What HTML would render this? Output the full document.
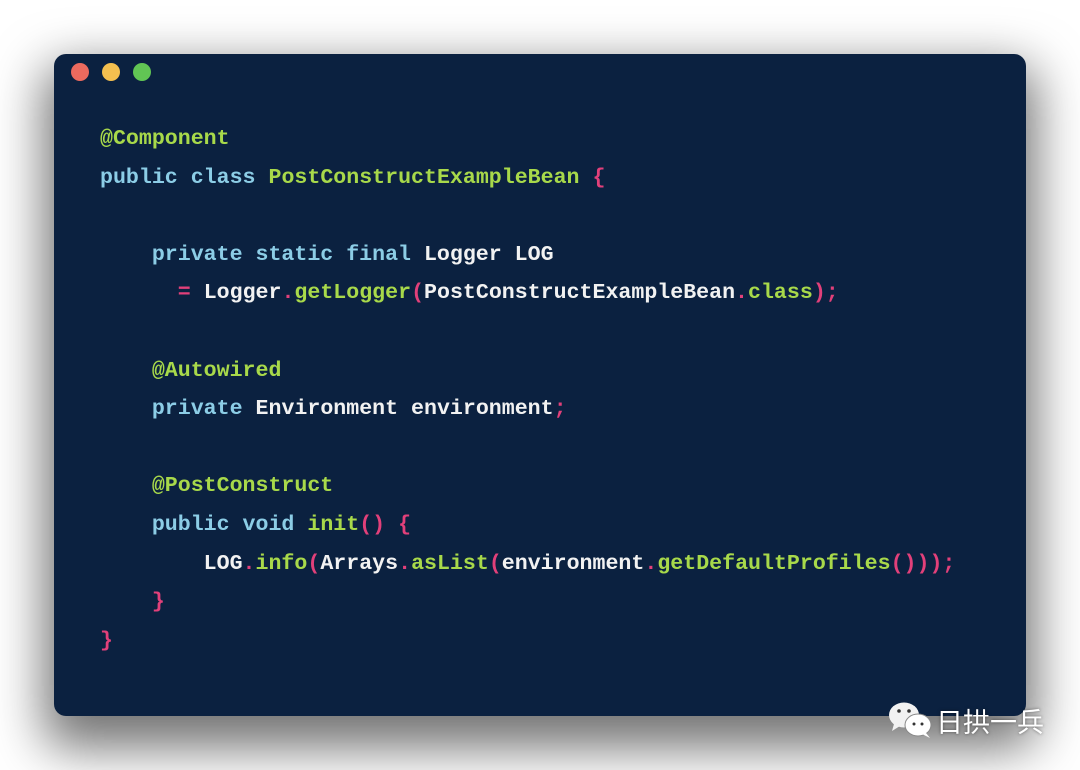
<!DOCTYPE html>
<html><head><meta charset="utf-8"><style>
html,body{margin:0;padding:0;background:#fff;width:1080px;height:770px;overflow:hidden;position:relative}
.card{position:absolute;left:54px;top:54px;width:972px;height:662px;background:#0b2140;border-radius:12px;box-shadow:0 22px 50px 10px rgba(0,0,0,0.55)}
.dot{position:absolute;top:9px;width:18px;height:18px;border-radius:50%}
pre{position:absolute;left:46px;top:66px;margin:0;font-family:"Liberation Mono",monospace;font-weight:bold;font-size:21.6px;line-height:38.6px;color:#f2f2f2}
.k{color:#8ccde6}.a{color:#a8d94a}.p{color:#e2407a}
.wm{position:absolute;left:888px;top:700px;font-family:"Liberation Sans","Noto Sans CJK SC",sans-serif;font-size:27px;color:#fff;text-shadow:0 0 3px rgba(0,0,0,.5);display:flex;align-items:center}
</style></head><body>
<div class="card">
<div class="dot" style="left:17px;background:#ec6a5e"></div>
<div class="dot" style="left:48px;background:#f4bf4f"></div>
<div class="dot" style="left:79px;background:#61c554"></div>
<pre><span class="a">@Component</span>
<span class="k">public class</span> <span class="a">PostConstructExampleBean</span> <span class="p">{</span>

    <span class="k">private static final</span> Logger LOG
      <span class="p">=</span> Logger<span class="p">.</span><span class="a">getLogger</span><span class="p">(</span>PostConstructExampleBean<span class="p">.</span><span class="a">class</span><span class="p">);</span>

    <span class="a">@Autowired</span>
    <span class="k">private</span> Environment environment<span class="p">;</span>

    <span class="a">@PostConstruct</span>
    <span class="k">public void</span> <span class="a">init</span><span class="p">()</span> <span class="p">{</span>
        LOG<span class="p">.</span><span class="a">info</span><span class="p">(</span>Arrays<span class="p">.</span><span class="a">asList</span><span class="p">(</span>environment<span class="p">.</span><span class="a">getDefaultProfiles</span><span class="p">()));</span>
    <span class="p">}</span>
<span class="p">}</span></pre>
</div>
<div class="wm">
<svg width="48" height="40" viewBox="0 0 48 40"><ellipse cx="16" cy="15" rx="15" ry="12.5" fill="#f2f2f2"/><path d="M6 24 L4 31 L12 26Z" fill="#f2f2f2"/><ellipse cx="30" cy="25" rx="13" ry="11" fill="#fff" stroke="#888" stroke-width="1"/><path d="M38 33 L42 38 L34 34Z" fill="#fff"/><circle cx="11" cy="11" r="1.8" fill="#333"/><circle cx="21" cy="11" r="1.8" fill="#333"/><circle cx="26" cy="24" r="1.5" fill="#333"/><circle cx="34" cy="24" r="1.5" fill="#333"/></svg>
<span>日拱一兵</span>
</div>
</body></html>
